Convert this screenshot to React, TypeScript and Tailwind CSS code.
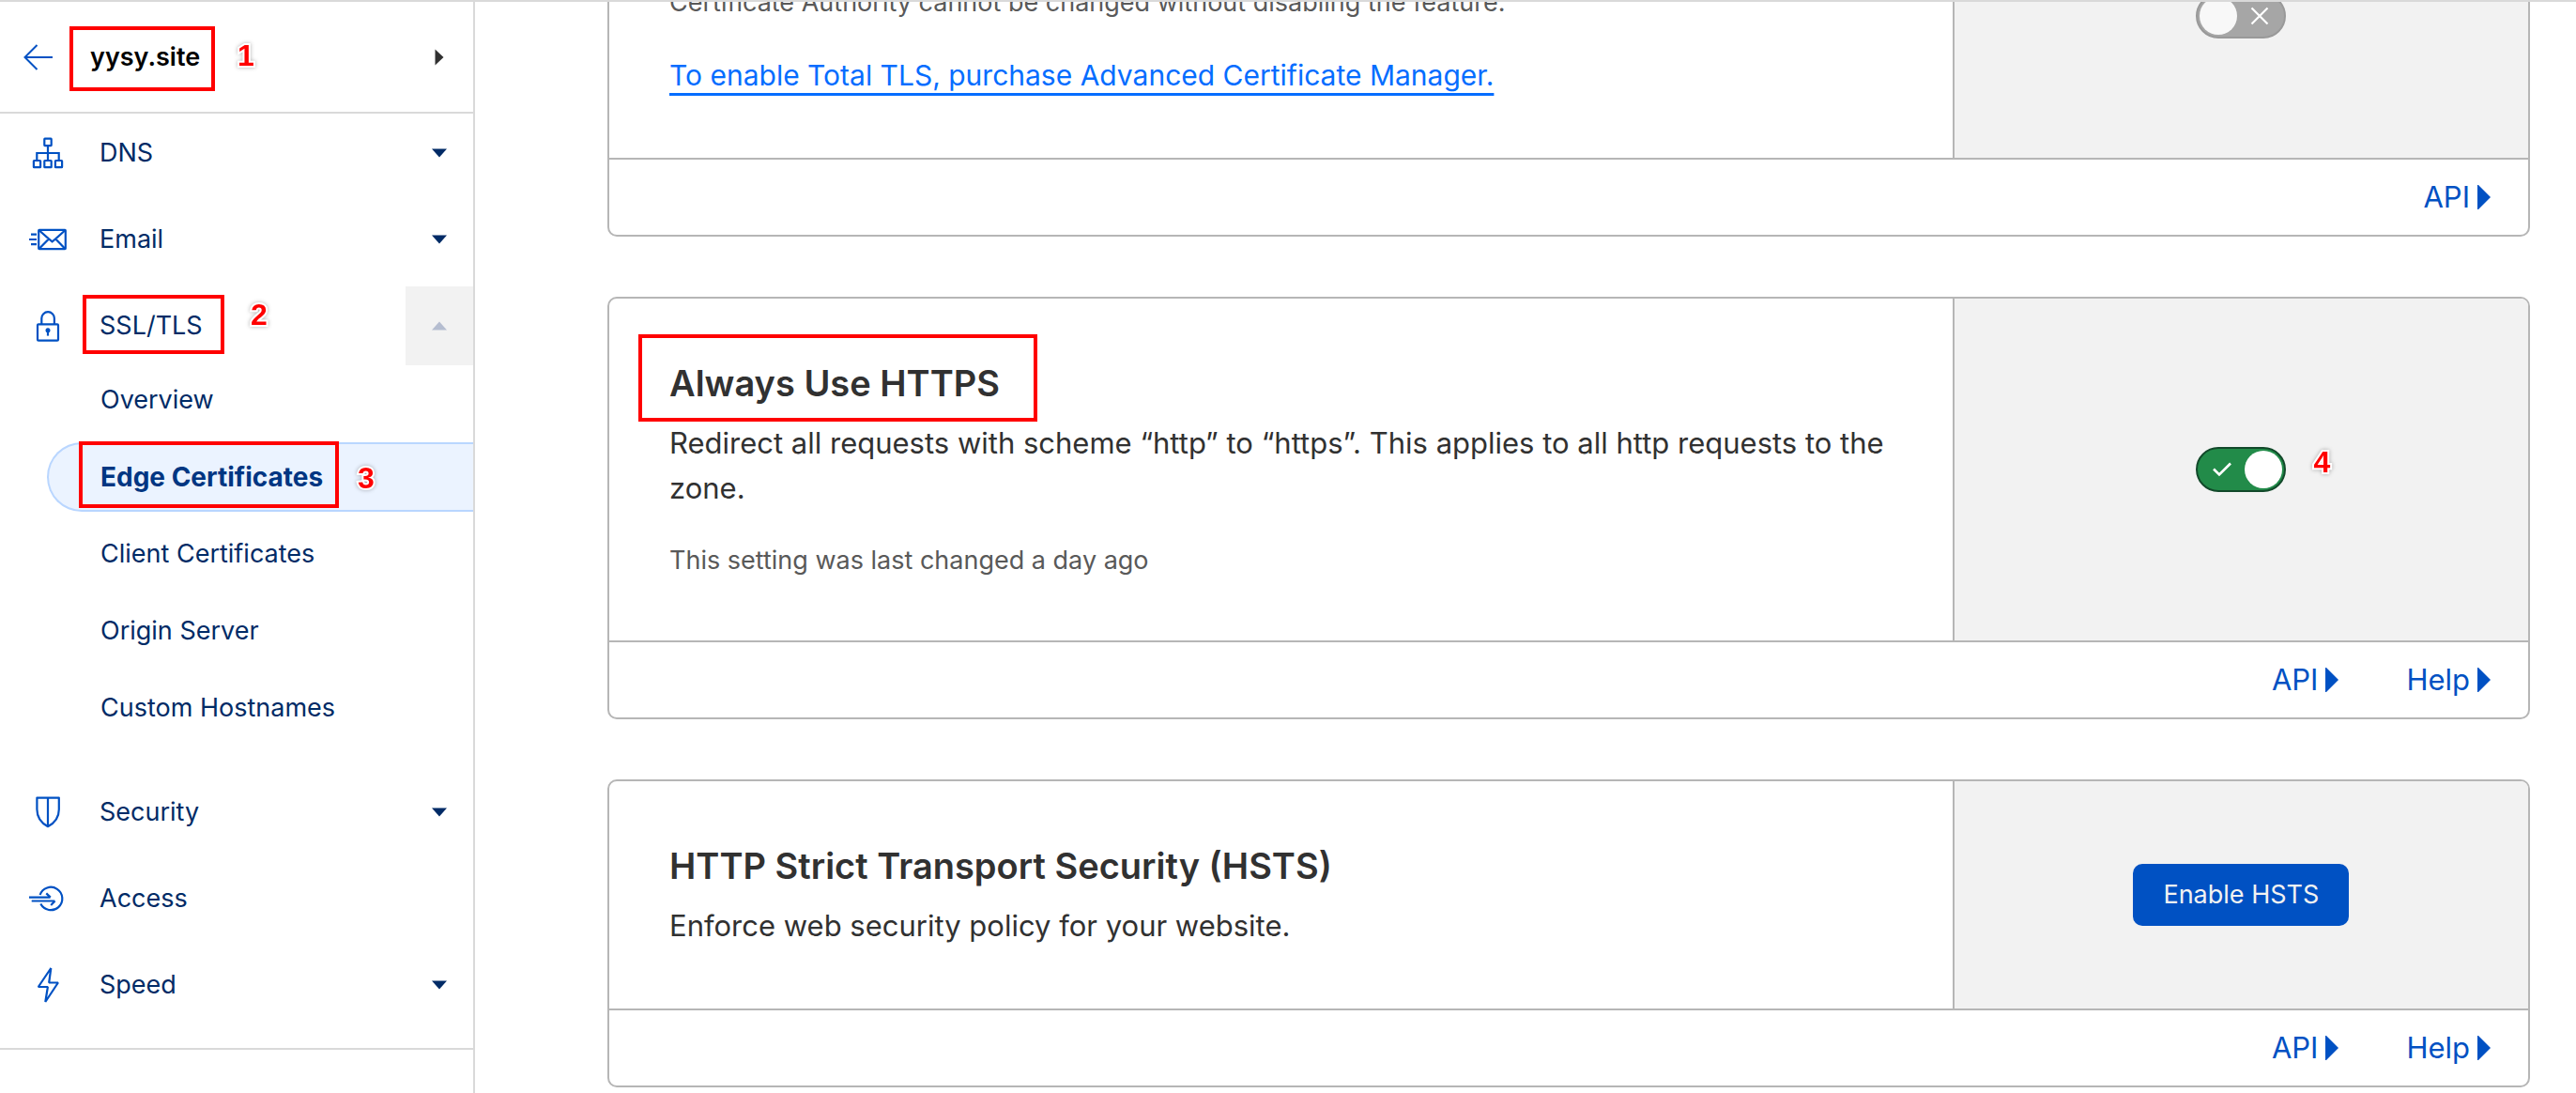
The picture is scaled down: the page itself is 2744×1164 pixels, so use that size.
import React, { useState } from "react";

type Children = { children: React.ReactNode };

function NavIcon({ children }: Children) {
  return (
    <svg
      width="40"
      height="40"
      viewBox="0 0 40 40"
      fill="none"
      stroke="currentColor"
      strokeWidth="2.2"
      className="shrink-0 text-[#0051c3]"
      aria-hidden="true"
    >
      {children}
    </svg>
  );
}

function DnsIcon() {
  return (
    <NavIcon>
      <rect x="16.3" y="4.7" width="7.4" height="7.4" rx="0.5" />
      <rect x="4.9" y="28" width="7.2" height="7.2" rx="0.5" />
      <rect x="16.3" y="28" width="7.4" height="7.2" rx="0.5" />
      <rect x="27.9" y="28" width="7.2" height="7.2" rx="0.5" />
      <path d="M20 12V28M8.3 28V20H31.7V28" />
    </NavIcon>
  );
}

function EmailIcon() {
  return (
    <NavIcon>
      <rect x="10.2" y="9.8" width="28.6" height="20.4" rx="0.6" />
      <path d="M10.6 10.2L21 19.4L24.6 22.4L28.2 19.4L38.4 10.2M10.8 29.8L21 19.4M38.2 29.8L28.2 19.4" />
      <path d="M2 14.6H8M0 20H8M2 25.2H8" />
    </NavIcon>
  );
}

function LockIcon() {
  return (
    <NavIcon>
      <rect x="9" y="18.3" width="22" height="17.4" rx="1" />
      <path d="M13.3 18V12a6.8 6.8 0 0 1 13.6 0V18" />
      <circle cx="20" cy="24.8" r="2.5" fill="currentColor" stroke="none" />
      <path d="M20 25V30.6" />
    </NavIcon>
  );
}

function ShieldIcon() {
  return (
    <NavIcon>
      <path d="M8.4 4.6H31.8V17C31.8 25 27 31.6 20 35.2C13.2 31.6 8.4 25 8.4 17ZM20 4.6V35" strokeLinejoin="round" />
    </NavIcon>
  );
}

function AccessIcon() {
  return (
    <NavIcon>
      <path d="M11.6 16A12.2 12.2 0 1 1 12.3 25.6" />
      <path d="M0 18.6H22.6M18.3 14.4L22.8 18.6" />
      <path d="M2.7 22.5H27.4M27.6 22.5L23.2 27" />
    </NavIcon>
  );
}

function BoltIcon() {
  return (
    <NavIcon>
      <path d="M23.3 2L9.8 22H19.9L17.3 38L30.9 17.5H21.2Z" strokeLinejoin="bevel" />
    </NavIcon>
  );
}

function Caret({ up = false }: { up?: boolean }) {
  return (
    <svg width="16" height="10" viewBox="0 0 16 10" fill="currentColor" aria-hidden="true">
      <path d={up ? "M0 9.5L8 0.5L16 9.5Z" : "M0 0.5H16L8 9.5Z"} />
    </svg>
  );
}

function Frame({ className }: { className: string }) {
  return <span className={`pointer-events-none absolute border-4 border-[#ff0000] ${className}`} />;
}

function Step({ n, className }: { n: number; className: string }) {
  return (
    <span
      className={`pointer-events-none absolute font-['Liberation_Sans',Arial,sans-serif] text-[32px] leading-8 font-bold text-[#ff0000] [paint-order:stroke_fill] [-webkit-text-stroke:4px_white] drop-shadow-[0_0_2px_rgba(0,0,0,0.3)] ${className}`}
    >
      {n}
    </span>
  );
}

function NavItem({
  icon,
  label,
  caret,
  open = false,
  children,
}: {
  icon: React.ReactNode;
  label: string;
  caret?: boolean;
  open?: boolean;
  children?: React.ReactNode;
}) {
  return (
    <div className="relative flex h-[84px] items-center pl-[31px]">
      {icon}
      <a href="#" className="ml-[35px] flex-1 text-[27px] leading-[42px] text-[#002b66]">
        {label}
      </a>
      {caret && (
        <button
          type="button"
          aria-label={`Toggle ${label}`}
          aria-expanded={open}
          className={`flex h-full w-[72px] items-center justify-center ${
            open ? "bg-[#f2f2f2] text-[#b5bdd0]" : "text-[#002b66]"
          }`}
        >
          <Caret up={open} />
        </button>
      )}
      {children}
    </div>
  );
}

function SubItem({ label }: { label: string }) {
  return (
    <li className="flex h-[74px] items-center pl-[57px]">
      <a href="#" className="text-[27px] leading-[42px] text-[#002b66]">
        {label}
      </a>
    </li>
  );
}

function Sidebar() {
  return (
    <aside className="w-[506px] shrink-0 border-r-2 border-[#d9d9d9]">
      <header className="relative flex h-[119px] items-center border-b-2 border-[#d9d9d9] pr-[31px] pl-[25px]">
        <a href="#" aria-label="Back" className="text-[#0051c3]">
          <svg width="32" height="28" viewBox="0 0 32 28" fill="none" stroke="currentColor" strokeWidth="2">
            <path d="M31 14H1.8M14.5 1L1.5 14L14.5 27" />
          </svg>
        </a>
        <h1 className="ml-[39px] flex-1 text-[27px] leading-[42px] font-semibold text-black">yysy.site</h1>
        <button type="button" aria-label="Switch site" className="text-[#313131]">
          <svg width="10" height="18" viewBox="0 0 10 18" fill="currentColor">
            <path d="M0.5 0.5L9.5 9L0.5 17.5Z" />
          </svg>
        </button>
        <Frame className="top-[26px] left-[74px] h-[69px] w-[155px]" />
        <Step n={1} className="top-[41px] left-[253px]" />
      </header>

      <nav className="flex flex-col gap-2 border-b-2 border-[#d9d9d9] pb-[25px]">
        <NavItem icon={<DnsIcon />} label="DNS" caret />
        <NavItem icon={<EmailIcon />} label="Email" caret />
        <div className="mb-6">
          <NavItem icon={<LockIcon />} label="SSL/TLS" caret open>
            <Frame className="top-[9px] left-[88px] h-[63px] w-[151px]" />
            <Step n={2} className="top-[14px] left-[267px]" />
          </NavItem>
          <ul className="flex flex-col gap-2 pl-[50px]">
            <SubItem label="Overview" />
            <li className="relative flex h-[74px] items-center rounded-l-full border-2 border-r-0 border-[#b9d6ff] bg-[#ebf3ff] pl-[55px]">
              <a href="#" aria-current="page" className="text-[28px] leading-[42px] font-bold text-[#003682]">
                Edge Certificates
              </a>
              <Frame className="-top-[3px] left-8 h-[71px] w-[277px]" />
              <Step n={3} className="top-[20px] left-[329px]" />
            </li>
            <SubItem label="Client Certificates" />
            <SubItem label="Origin Server" />
            <SubItem label="Custom Hostnames" />
          </ul>
        </div>
        <NavItem icon={<ShieldIcon />} label="Security" caret />
        <NavItem icon={<AccessIcon />} label="Access" />
        <NavItem icon={<BoltIcon />} label="Speed" caret />
      </nav>
    </aside>
  );
}

function Toggle({
  label,
  initial = false,
  disabled = false,
}: {
  label: string;
  initial?: boolean;
  disabled?: boolean;
}) {
  const [on, setOn] = useState(initial);
  return (
    <label
      className={`relative flex h-12 w-24 items-center justify-between rounded-full border-2 p-0.5 ${
        on ? "flex-row-reverse border-[#12492a] bg-[#228b49]" : "border-[#999999] bg-[#a6a6a6]"
      }`}
    >
      <input
        type="checkbox"
        role="switch"
        aria-label={label}
        checked={on}
        disabled={disabled}
        onChange={(e) => setOn(e.target.checked)}
        className="absolute inset-0 h-full w-full opacity-0"
      />
      <span className={`h-10 w-10 rounded-full ${on ? "bg-white" : "bg-[#f8f8f8]"}`} />
      <svg
        width="20"
        height="20"
        viewBox="0 0 20 20"
        fill="none"
        stroke="#ffffff"
        strokeWidth="2.6"
        className="mx-3.5"
        aria-hidden="true"
      >
        {on ? <path d="M1 9.5L7 15.5L19 3.5" /> : <path d="M1.5 1.5L18.5 18.5M18.5 1.5L1.5 18.5" strokeWidth="2.2" />}
      </svg>
    </label>
  );
}

function Card({
  children,
  control,
  links,
  bodyClass = "p-[64px]",
}: {
  children: React.ReactNode;
  control: React.ReactNode;
  links: string[];
  bodyClass?: string;
}) {
  return (
    <section className="overflow-hidden rounded-[10px] border-2 border-[#b6b6b6] bg-white">
      <div className="grid grid-cols-[7fr_3fr]">
        <div className={bodyClass}>{children}</div>
        <div className="flex items-center justify-center border-l-2 border-[#b6b6b6] bg-[#f2f2f2]">{control}</div>
      </div>
      <footer className="flex h-[82px] items-center justify-end gap-[72px] border-t-2 border-[#b6b6b6] pr-10">
        {links.map((l) => (
          <button key={l} type="button" className="flex items-center gap-2 text-[31px] leading-[48px] text-[#0051c3]">
            {l}
            <svg width="14" height="26" viewBox="0 0 14 26" fill="currentColor" aria-hidden="true">
              <path d="M0 0H1L14 13L1 26H0Z" />
            </svg>
          </button>
        ))}
      </footer>
    </section>
  );
}

export default function App() {
  return (
    <div className="flex min-h-screen overflow-hidden border-t-2 border-[#d9d9d9] bg-white font-['Inter',sans-serif] text-[#313131]">
      <Sidebar />
      <main className="min-w-0 flex-1 overflow-hidden pr-[49px] pl-[141px]">
        <div className="-mt-[138px] flex flex-col gap-16">
          <Card
            bodyClass="px-[64px] pt-[116px] pb-[64px]"
            control={<Toggle label="Total TLS" disabled />}
            links={["API"]}
          >
            <p className="text-[27px] leading-[42px] text-[#595959]">
              Certificate Authority cannot be changed without disabling the feature.
            </p>
            <p className="mt-8 text-[30px] leading-[48px]">
              <a
                href="#"
                className="text-[#056dff] underline decoration-[3px] underline-offset-[8px] [text-decoration-skip-ink:none]"
              >
                To enable Total TLS, purchase Advanced Certificate Manager.
              </a>
            </p>
          </Card>

          <Card
            control={
              <div className="relative">
                <Toggle label="Always Use HTTPS" initial />
                <Step n={4} className="top-0 left-[125px]" />
              </div>
            }
            links={["API", "Help"]}
          >
            <div className="relative">
              <h2 className="text-[38px] leading-[52px] font-semibold">Always Use HTTPS</h2>
              <Frame className="-top-[26px] -left-[33px] h-[93px] w-[425px]" />
            </div>
            <p className="mt-3.5 text-[31px] leading-[48px]">
              Redirect all requests with scheme “http” to “https”. This applies to all http requests to the zone.
            </p>
            <p className="mt-8 text-[27px] leading-[42px] text-[#595959]">This setting was last changed a day ago</p>
          </Card>

          <Card
            control={
              <button
                type="button"
                className="rounded-[10px] bg-[#0051c3] px-8 py-3 text-[27px] leading-[42px] text-[#f2f2f2]"
              >
                Enable HSTS
              </button>
            }
            links={["API", "Help"]}
          >
            <h2 className="text-[38px] leading-[52px] font-semibold">HTTP Strict Transport Security (HSTS)</h2>
            <p className="mt-3.5 text-[31px] leading-[48px]">Enforce web security policy for your website.</p>
          </Card>
        </div>
      </main>
    </div>
  );
}
